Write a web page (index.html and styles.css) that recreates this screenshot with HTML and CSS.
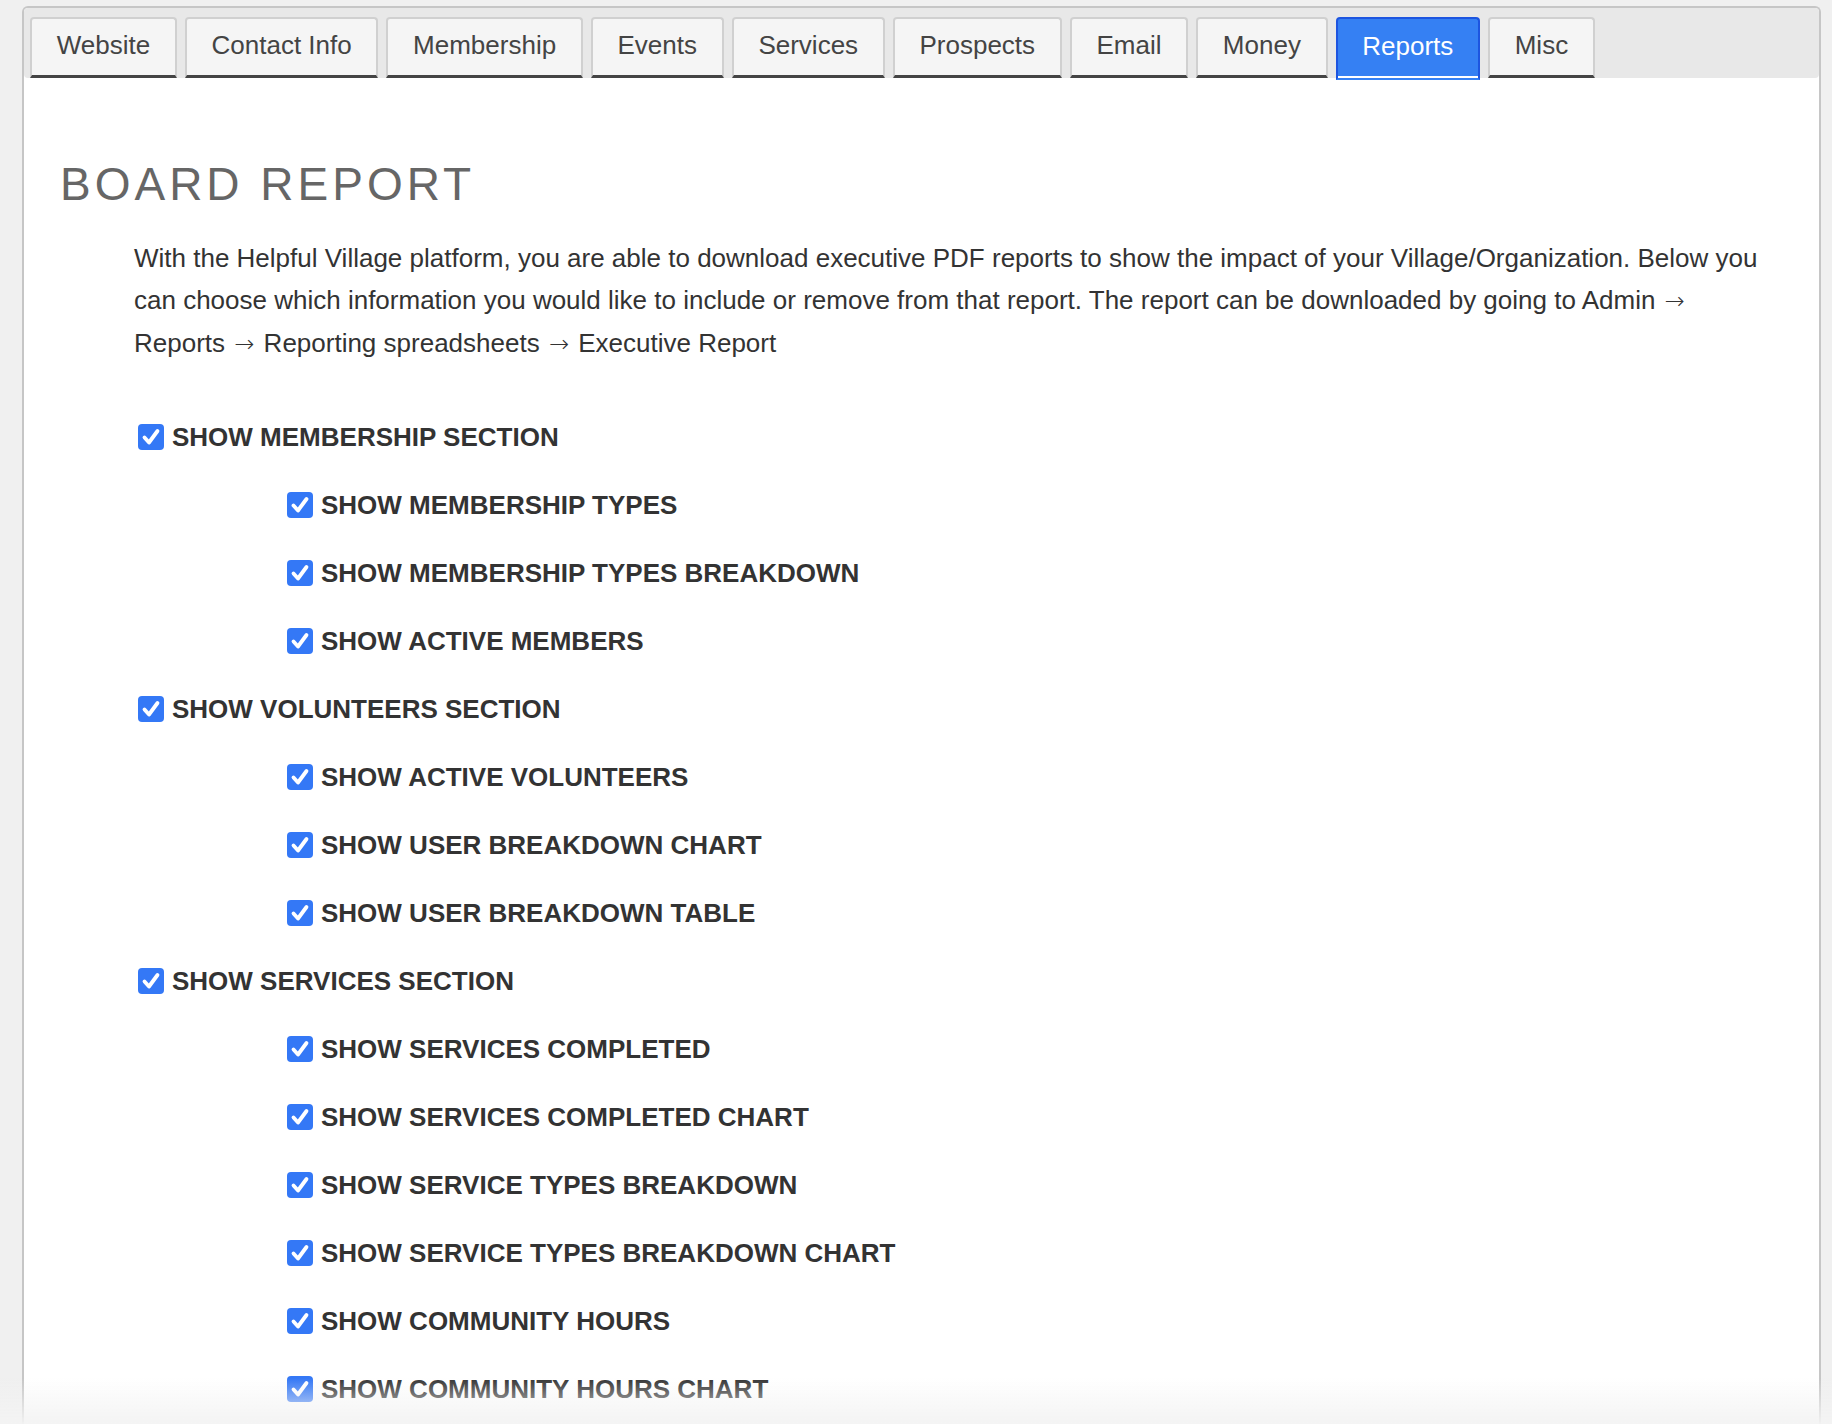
FILE: index.html
```html
<!DOCTYPE html>
<html lang="en">
<head>
<meta charset="utf-8">
<title>Board Report</title>
<link rel="stylesheet" href="styles.css">
</head>
<body>
<div class="panel">
  <ul class="tabs">
    <li class="tab">Website</li>
    <li class="tab">Contact Info</li>
    <li class="tab">Membership</li>
    <li class="tab">Events</li>
    <li class="tab">Services</li>
    <li class="tab">Prospects</li>
    <li class="tab">Email</li>
    <li class="tab">Money</li>
    <li class="tab active">Reports</li>
    <li class="tab">Misc</li>
  </ul>
  <div class="content">
    <h1 class="title">BOARD REPORT</h1>
    <p class="intro">With the Helpful Village platform, you are able to download executive PDF reports to show the impact of your Village/Organization. Below you can choose which information you would like to include or remove from that report. The report can be downloaded by going to Admin <span class="arrow">&rarr;</span> Reports <span class="arrow">&rarr;</span> Reporting spreadsheets <span class="arrow">&rarr;</span> Executive Report</p>
    <div class="options">
      <label class="opt top"><span class="cb"><svg viewBox="0 0 26 26"><path d="M6.5 13.5 L11 18.5 L19.5 7"/></svg></span>Show Membership Section</label>
      <label class="opt sub"><span class="cb"><svg viewBox="0 0 26 26"><path d="M6.5 13.5 L11 18.5 L19.5 7"/></svg></span>Show Membership Types</label>
      <label class="opt sub"><span class="cb"><svg viewBox="0 0 26 26"><path d="M6.5 13.5 L11 18.5 L19.5 7"/></svg></span>Show Membership Types Breakdown</label>
      <label class="opt sub"><span class="cb"><svg viewBox="0 0 26 26"><path d="M6.5 13.5 L11 18.5 L19.5 7"/></svg></span>Show Active Members</label>
      <label class="opt top"><span class="cb"><svg viewBox="0 0 26 26"><path d="M6.5 13.5 L11 18.5 L19.5 7"/></svg></span>Show Volunteers Section</label>
      <label class="opt sub"><span class="cb"><svg viewBox="0 0 26 26"><path d="M6.5 13.5 L11 18.5 L19.5 7"/></svg></span>Show Active Volunteers</label>
      <label class="opt sub"><span class="cb"><svg viewBox="0 0 26 26"><path d="M6.5 13.5 L11 18.5 L19.5 7"/></svg></span>Show User Breakdown Chart</label>
      <label class="opt sub"><span class="cb"><svg viewBox="0 0 26 26"><path d="M6.5 13.5 L11 18.5 L19.5 7"/></svg></span>Show User Breakdown Table</label>
      <label class="opt top"><span class="cb"><svg viewBox="0 0 26 26"><path d="M6.5 13.5 L11 18.5 L19.5 7"/></svg></span>Show Services Section</label>
      <label class="opt sub"><span class="cb"><svg viewBox="0 0 26 26"><path d="M6.5 13.5 L11 18.5 L19.5 7"/></svg></span>Show Services Completed</label>
      <label class="opt sub"><span class="cb"><svg viewBox="0 0 26 26"><path d="M6.5 13.5 L11 18.5 L19.5 7"/></svg></span>Show Services Completed Chart</label>
      <label class="opt sub"><span class="cb"><svg viewBox="0 0 26 26"><path d="M6.5 13.5 L11 18.5 L19.5 7"/></svg></span>Show Service Types Breakdown</label>
      <label class="opt sub"><span class="cb"><svg viewBox="0 0 26 26"><path d="M6.5 13.5 L11 18.5 L19.5 7"/></svg></span>Show Service Types Breakdown Chart</label>
      <label class="opt sub"><span class="cb"><svg viewBox="0 0 26 26"><path d="M6.5 13.5 L11 18.5 L19.5 7"/></svg></span>Show Community Hours</label>
      <label class="opt sub"><span class="cb"><svg viewBox="0 0 26 26"><path d="M6.5 13.5 L11 18.5 L19.5 7"/></svg></span>Show Community Hours Chart</label>
    </div>
  </div>
</div>
<div class="fade"></div>
</body>
</html>
```
FILE: styles.css
```css
html, body {
  margin: 0;
  padding: 0;
  height: 100%;
  overflow: hidden;
}
body {
  background: #f0f0f0;
  font-family: "Liberation Sans", Arial, Helvetica, sans-serif;
  color: #333;
}
.panel {
  margin: 6px 11px 0 22px;
  border: 2px solid #c6c6c6;
  border-bottom: none;
  border-radius: 6px 6px 0 0;
  background: #fff;
  min-height: 1500px;
}
.tabs {
  list-style: none;
  margin: 0;
  padding: 9px 0 0 6px;
  display: flex;
  gap: 8px;
  background: #e8e8e8;
  border-radius: 4px;
  height: 61px;
}
.tab {
  box-sizing: border-box;
  height: 61px;
  padding: 0 24.7px 3px;
  display: flex;
  align-items: center;
  justify-content: center;
  background: #f5f5f5;
  border: 2px solid #d0d0d0;
  border-bottom: 3px solid #444;
  border-radius: 4px 4px 0 0;
  font-size: 26px;
  color: #444;
  white-space: nowrap;
}
.tab.active {
  background: #3580f3;
  border-color: #1d55e0;
  border-bottom: 2px solid #3580f3;
  box-shadow: inset 0 -2px 0 #fff;
  color: #fff;
  height: 63px;
  padding-bottom: 4px;
}
.content {
  padding: 80px 36px 0 36px;
}
.title {
  margin: 0;
  font-size: 46px;
  font-weight: normal;
  letter-spacing: 4px;
  color: #666;
  line-height: 53px;
}
.intro {
  margin: 26px 14px 0 74px;
  font-size: 26px;
  line-height: 42px;
  color: #333;
}
.arrow {
  font-family: "DejaVu Sans", sans-serif;
  font-size: 24px;
  font-weight: 200;
  margin: 0 2px;
}
.options {
  margin-top: 38px;
  display: flex;
  flex-direction: column;
}
.opt {
  display: flex;
  align-items: center;
  height: 68px;
  font-size: 26px;
  font-weight: bold;
  text-transform: uppercase;
  color: #333;
}
.opt.top {
  padding-left: 78px;
}
.opt.sub {
  padding-left: 227px;
}
.cb {
  width: 26px;
  height: 26px;
  border-radius: 4px;
  background: #3478f6;
  margin-right: 8px;
  display: flex;
  flex: none;
}
.cb svg {
  width: 26px;
  height: 26px;
  fill: none;
  stroke: #fff;
  stroke-width: 3.8;
  stroke-linecap: round;
  stroke-linejoin: round;
}
.fade {
  position: fixed;
  left: 0;
  right: 0;
  bottom: 0;
  height: 46px;
  background: linear-gradient(to bottom, rgba(243,243,243,0), rgba(243,243,243,0.95));
  pointer-events: none;
}
```
